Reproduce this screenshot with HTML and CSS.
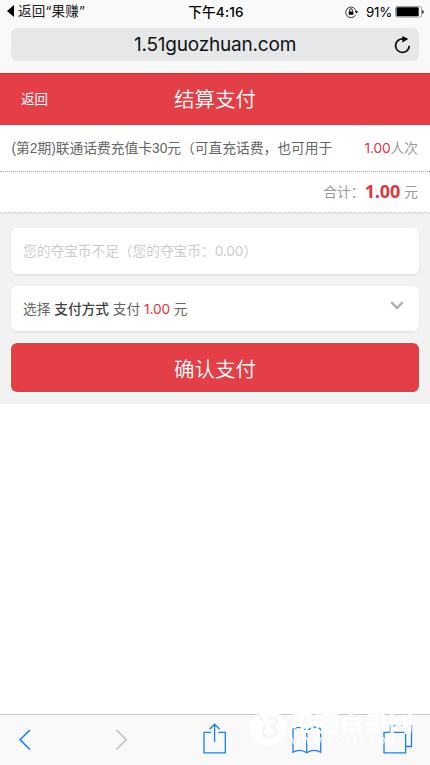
FILE: index.html
```html
<!DOCTYPE html>
<html lang="zh-CN">
<head>
<meta charset="utf-8">
<meta name="viewport" content="width=device-width">
<title>结算支付</title>
<link rel="stylesheet" href="styles.css">
</head>
<body>
<div class="phone">
  <div class="browser-top">
    <div class="status">
      <div class="status-back"><svg width="7" height="12" viewBox="0 0 7 12"><path d="M7 0v12L0 6z"/></svg><span class="back-app">返回<i>“</i>果赚<i>”</i></span></div>
      <div class="clock">下午4:16</div>
      <div class="status-right">
        <svg class="lock" width="14" height="12" viewBox="0 0 14 12"><path d="M10.600 9A5.300 5.300 0 1 1 11.300 6" fill="none" stroke="#222" stroke-width=".9"/><path d="M9.800 5.300h3.400L11.500 7.500zM3.700 5.400h4.600v3.400H3.700z"/><path d="M4.600 5.500V4.200a1.400 1.400 0 0 1 2.800 0v1.300" fill="none" stroke="#000" stroke-width=".9"/></svg>
        <span class="percent">91%</span>
        <svg class="battery" width="29" height="12" viewBox="0 0 29 12"><rect x=".5" y=".5" width="26" height="10.6" rx="1.8" fill="none" stroke="#888" stroke-width=".8"/><rect x="1.5" y="1.3" width="22.2" height="9" rx="1"/><path d="M27.3 4q1.4.4 1.4 1.9T27.3 7.8z"/></svg>
      </div>
    </div>
    <div class="address"><span>1.51guozhuan.com</span><svg class="reload" width="17" height="18" viewBox="0 0 17 18"><path d="M9 2.9A6.8 6.8 0 1 0 15.2 9.7" fill="none" stroke="#111" stroke-width="1.8"/><path d="M8.300 0l6 3.100-6 3.300z"/></svg></div>
  </div>
  <header class="header"><a class="back">返回</a><h1>结算支付</h1></header>
  <main class="checkout">
    <section class="order">
      <div class="item"><span class="item-name">(第2期)联通话费充值卡30元（可直充话费，也可用于</span><span class="item-count"><em>1.00</em>人次</span></div>
      <div class="total"><span>合计：</span><strong>1.00</strong><span class="unit">元</span></div>
      <svg class="zigzag" width="430" height="4"><defs><pattern id="teeth" width="5" height="4" patternUnits="userSpaceOnUse"><path d="M0 1L2.5 3 5 1V4H0z" fill="#f2f2f2"/><path d="M0 .8L2.5 2.8 5 .8" fill="none" stroke="#c2c2c2" stroke-width=".9"/></pattern></defs><rect width="430" height="4" fill="url(#teeth)"/></svg>
    </section>
    <section class="payment">
      <div class="card balance"><span>您的夺宝币不足（您的夺宝币：<i class="digits">0.00</i>）</span></div>
      <div class="card method"><span>选择 <b>支付方式</b> 支付 <em>1.00</em> 元</span><svg class="chevron" width="14" height="9" viewBox="0 0 14 9"><path d="M1.200 1.200L7 7l5.800-5.800" fill="none" stroke="#b3b3b3" stroke-width="2.5"/></svg></div>
      <button class="confirm">确认支付</button>
    </section>
  </main>
  <nav class="toolbar">
    <svg class="tools" width="430" height="50" viewBox="0 1 430 50" fill="none" stroke="#1681f5" stroke-width="1.3">
      <path d="M30 16L20 25.800 30 35.500" stroke-width="1.6"/>
      <path d="M116.300 16l10 9.800-10 9.700" stroke="#bcbcbc" stroke-width="1.500"/>
      <path d="M211 18.300h-7v20.500h21.300V18.300h-7M214.600 28V10.500M209.600 15.200l5-5 5 5"/>
      <path d="M306.700 17.500q-7-7-13.700-2.500v23.200q7-4 13.700.5 7-4.500 14-.5V15q-7-4.500-14 2.500v21"/>
      <path d="M384 18.300h21.600v20.500H384zM390.500 18v-6.300h21V32.500h-5.500"/>
    </svg>
    <div class="watermark">
      <svg width="38" height="38" viewBox="0 0 38 38"><circle cx="19" cy="19" r="17.500" fill="#fff"/><path d="M9 5l5 8M19 11q8-4 9 1 0 4-6 6 6 0 5 5-2 6-9 5-5-1-4-6l3-6" fill="none" stroke="#f5f5f5" stroke-width="2.8"/></svg>
      <div class="watermark-text"><b>电脑百事网</b><span>WWW.PC841.COM</span></div>
    </div>
  </nav>
</div>
</body>
</html>
```
FILE: styles.css
```css
* { box-sizing: border-box; }
body { margin: 0; font-family: "Liberation Sans", "Noto Sans CJK SC", sans-serif; background: #fff; }
em, i { font-style: normal; }
svg { display: block; flex: none; }
.phone { width: 430px; height: 765px; display: flex; flex-direction: column; overflow: hidden; }
.browser-top { height: 73px; background: #f9f9f9; padding: 0 11px; flex: none; font-family: Inter, "Noto Sans CJK SC", sans-serif; }
.status { height: 28px; margin: 0 -5px 0 -4px; display: grid; grid-template-columns: 1fr auto 1fr; align-items: start; font-size: 13.600px; line-height: 24px; white-space: nowrap; }
.status-back { display: flex; gap: 4px; }
.status-back svg { margin-top: 5px; }
.back-app { color: #222; letter-spacing: .1px; line-height: 23px; }
.clock { font-weight: 500; padding-left: 1px; letter-spacing: .2px; }
.status-right { display: flex; justify-content: flex-end; }
.lock { margin: 6px 7px 0 0; }
.percent { margin-right: 3px; font-size: 13.300px; letter-spacing: -.2px; }
.battery { margin-top: 6px; }
.address { height: 33px; border-radius: 6px; background: #e6e7e9; display: grid; grid-template-columns: 1fr auto 1fr; align-items: center; color: #111; font-size: 19px; letter-spacing: -.2px; }
.address span { grid-column: 2; }
.reload { justify-self: end; margin-right: 8px; }
.header { height: 52px; flex: none; background: #e43e46; color: #fff; display: grid; grid-template-columns: 1fr auto 1fr; align-items: center; border-top: 1px solid #d9303a; padding-bottom: 4px; }
.back { padding-left: 21px; font-size: 13.500px; }
h1 { margin: 0; font-size: 20.500px; font-weight: 350; }
.checkout { height: 279px; background: #f2f2f2; }
.order { height: 90px; background: #fff; color: #666; font-size: 13.750px; }
.item { height: 47px; padding: 0 12px 3px 11.500px; display: flex; align-items: center; justify-content: space-between; border-bottom: 1px dotted #aaa; white-space: nowrap; }
.item-count, .total { color: #999; }
em, strong { color: #e2353e; }
em, .digits { font-family: Inter, sans-serif; font-size: 13.700px; letter-spacing: -.1px; }
.total { height: 39px; padding: 0 12px 1px; display: flex; align-items: center; justify-content: flex-end; }
.total strong { font: bold 18px "Open Sans", sans-serif; letter-spacing: -.1px; }
.unit { margin-left: 4px; }
.payment { padding: 13px 11px; display: flex; flex-direction: column; gap: 12px; }
.card { height: 46px; border-radius: 6px; background: #fff; padding: 0 12px 2px; display: flex; align-items: center; justify-content: space-between; font-size: 13.700px; box-shadow: 0 1px 2px #ddd; color: #666; }
.balance { color: #ccc; }
.card b { color: #444; font-weight: 500; }
.method { height: 45px; }
.chevron { margin: -4px 3px 0 0; }
.confirm { height: 49px; border: 0; border-radius: 6px; background: #e43e46; color: #fff; font: 350 20.500px "Noto Sans CJK SC", sans-serif; padding: 0; box-shadow: 0 0 1px 1px #fff; }
.toolbar { margin-top: auto; height: 51px; flex: none; border-top: 1px solid #c9c9c9; background: #f9f9f9; position: relative; }
.watermark { position: absolute; left: 249px; top: -6px; display: flex; gap: 3px; color: #fff; }
.watermark-text { display: flex; flex-direction: column; white-space: nowrap; }
.watermark b { font-size: 24.600px; line-height: 28px; }
.watermark span { font: 500 8.500px/9px Inter, sans-serif; letter-spacing: 2.300px; padding-left: 1px; }
```
